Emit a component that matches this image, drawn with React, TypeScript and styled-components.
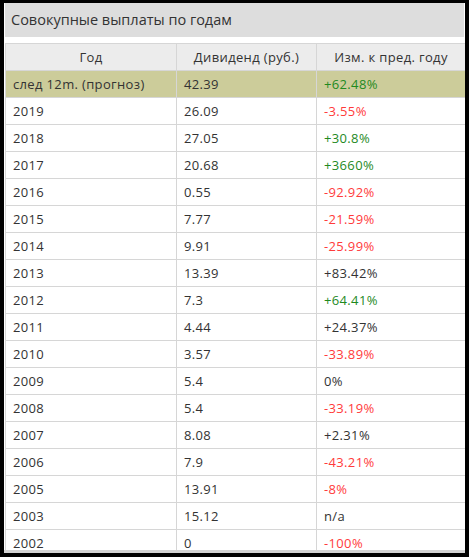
import React from "react";
import styled, { createGlobalStyle } from "styled-components";

const Global = createGlobalStyle`
  html, body { margin: 0; padding: 0; background: #000; }
  body { font-family: "Open Sans", "DejaVu Sans", sans-serif; }
`;

const Frame = styled.div`
  width: 469px;
  height: 557px;
  box-sizing: border-box;
  background: #000;
  padding: 3px 4px 4px 4px;
`;

const Panel = styled.div`
  height: 100%;
  box-sizing: border-box;
  background: #fff;
  overflow: hidden;
  padding: 0 1px;
  border-bottom: 3px solid #d2d2d2;
  display: flex;
  flex-direction: column;
  gap: 6px;
`;

const Title = styled.div`
  background: #dddddd;
  height: 34px;
  line-height: 34px;
  padding-left: 6px;
  font-size: 14.5px;
  color: #333;
  flex-shrink: 0;
`;

const Table = styled.table`
  border-collapse: collapse;
  width: 460px;
  table-layout: fixed;
  font-size: 13px;
  letter-spacing: 0.35px;
  color: #333;
`;

const HeadCell = styled.th`
  background: #ececec;
  font-weight: 400;
  text-align: center;
  height: 26px;
  padding: 0;
  border: 1px solid #d6d6d6;
`;

const Row = styled.tr<{ $hl?: boolean }>`
  background: ${(p) => (p.$hl ? "#cccc9a" : "#fff")};
`;

const Cell = styled.td<{ $tone?: "up" | "down" | "none" }>`
  height: 26px;
  padding: 0 0 0 7px;
  border: 1px solid #d6d6d6;
  white-space: nowrap;
  color: ${(p) =>
    p.$tone === "up" ? "#1f8a1f" : p.$tone === "down" ? "#ff3b3b" : "#333"};
`;

type R = [string, string, string, "up" | "down" | "none"];

const rows: R[] = [
  ["2019", "26.09", "-3.55%", "down"],
  ["2018", "27.05", "+30.8%", "up"],
  ["2017", "20.68", "+3660%", "up"],
  ["2016", "0.55", "-92.92%", "down"],
  ["2015", "7.77", "-21.59%", "down"],
  ["2014", "9.91", "-25.99%", "down"],
  ["2013", "13.39", "+83.42%", "none"],
  ["2012", "7.3", "+64.41%", "up"],
  ["2011", "4.44", "+24.37%", "none"],
  ["2010", "3.57", "-33.89%", "down"],
  ["2009", "5.4", "0%", "none"],
  ["2008", "5.4", "-33.19%", "down"],
  ["2007", "8.08", "+2.31%", "none"],
  ["2006", "7.9", "-43.21%", "down"],
  ["2005", "13.91", "-8%", "down"],
  ["2003", "15.12", "n/a", "none"],
  ["2002", "0", "-100%", "down"],
];

export default function App() {
  return (
    <>
      <Global />
      <Frame>
        <Panel>
          <Title>Совокупные выплаты по годам</Title>
          <Table>
            <colgroup>
              <col style={{ width: 171 }} />
              <col style={{ width: 140 }} />
              <col style={{ width: 149 }} />
            </colgroup>
            <thead>
              <tr>
                <HeadCell>Год</HeadCell>
                <HeadCell>Дивиденд (руб.)</HeadCell>
                <HeadCell>Изм. к пред. году</HeadCell>
              </tr>
            </thead>
            <tbody>
              <Row $hl>
                <Cell>след 12m. (прогноз)</Cell>
                <Cell>42.39</Cell>
                <Cell $tone="up">+62.48%</Cell>
              </Row>
              {rows.map((r) => (
                <Row key={r[0]}>
                  <Cell>{r[0]}</Cell>
                  <Cell>{r[1]}</Cell>
                  <Cell $tone={r[3]}>{r[2]}</Cell>
                </Row>
              ))}
            </tbody>
          </Table>
        </Panel>
      </Frame>
    </>
  );
}
